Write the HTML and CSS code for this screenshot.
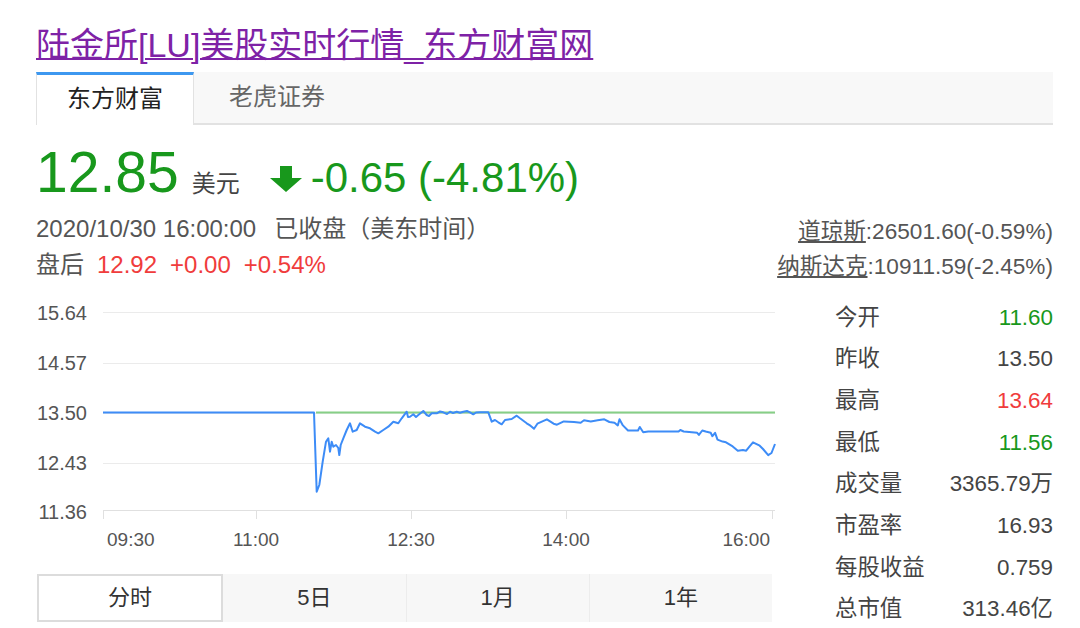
FILE: index.html
```html
<!DOCTYPE html>
<html lang="zh-CN">
<head>
<meta charset="utf-8">
<title>陆金所[LU]美股实时行情_东方财富网</title>
<link rel="stylesheet" href="styles.css">
</head>
<body>
<div class="page">
  <h1 class="title"><a href="#">陆金所[LU]美股实时行情_东方财富网</a></h1>
  <div class="tabs">
    <div class="tab active">东方财富</div>
    <div class="tab">老虎证券</div>
  </div>
  <div class="quote">
    <div class="quote-main">
      <div class="price-row">
        <span class="price">12.85</span>
        <span class="unit">美元</span>
        <svg class="arrow" viewBox="0 0 32 26" width="32" height="26"><path d="M10 0h12v12h10L16 26 0 12h10z" fill="#18981c"/></svg>
        <span class="change">-0.65 (-4.81%)</span>
      </div>
      <div class="time-row">2020/10/30 16:00:00<span class="status">已收盘（美东时间）</span></div>
      <div class="after-row"><span class="after-label">盘后</span><span class="up">12.92</span><span class="up">+0.00</span><span class="up">+0.54%</span></div>
    </div>
    <div class="indices">
      <div class="index"><a href="#">道琼斯</a>:26501.60(-0.59%)</div>
      <div class="index"><a href="#">纳斯达克</a>:10911.59(-2.45%)</div>
    </div>
  </div>
  <div class="body">
    <div class="chart-col">
      <svg class="chart" width="745" height="270" viewBox="0 0 745 270">
        <g class="grid">
          <line x1="67" y1="22.5" x2="739" y2="22.5"/>
          <line x1="67" y1="73.5" x2="739" y2="73.5"/>
          <line x1="67" y1="123.5" x2="739" y2="123.5"/>
          <line x1="67" y1="173.5" x2="739" y2="173.5"/>
        </g>
        <g class="axis">
          <line x1="67" y1="220.5" x2="739" y2="220.5"/>
          <line x1="67.5" y1="220" x2="67.5" y2="229"/>
          <line x1="220.5" y1="220" x2="220.5" y2="229"/>
          <line x1="375.5" y1="220" x2="375.5" y2="229"/>
          <line x1="530.5" y1="220" x2="530.5" y2="229"/>
          <line x1="736.5" y1="220" x2="736.5" y2="229"/>
        </g>
        <g class="ylabels">
          <text x="51" y="30">15.64</text>
          <text x="51" y="80">14.57</text>
          <text x="51" y="130">13.50</text>
          <text x="51" y="180">12.43</text>
          <text x="51" y="229">11.36</text>
        </g>
        <g class="xlabels">
          <text x="71" y="256" class="start">09:30</text>
          <text x="220" y="256">11:00</text>
          <text x="375" y="256">12:30</text>
          <text x="530" y="256">14:00</text>
          <text x="734" y="256" class="end">16:00</text>
        </g>
        <line class="prev-close" x1="280" y1="122.5" x2="739" y2="122.5"/>
        <polyline class="price-line" points="67,122.5 278,122.5 280.7,201.7 283.3,195 286.7,171.7 290,151.7 292.3,148.3 294,161.7 295.7,151.7 297.3,156.7 300,155 302.3,158 303.3,165 304.7,155 307.3,148.3 310.7,140 314,133.3 316.7,141.7 320.7,140 324,133.3 329,136.7 334,138.3 339,141.7 342.3,143.3 347.3,140 352.3,136.7 357.3,131.7 362.3,133.3 365.7,128.3 370.7,121.7 372,127 374,126.7 377.3,124.3 380,127 382.3,125 387.3,121 390.7,125 393,126 395.7,123.3 400.7,123.3 404,121.5 407.3,122.3 411,124 414,121.7 417,123 420.7,121.7 424,122.8 427.3,121.7 431,121 434,122.3 437.3,124.3 440,122.5 444,122.3 452.3,122.3 455.7,131.7 459,130 462.3,132.3 465.7,134.3 469,130 475.7,129 480.7,125.7 484,128.3 490.7,133.3 494,135.4 495.7,136.7 498,138.8 501.4,133.7 510.9,129.3 517.6,133.7 521,134.7 527.8,131.4 538,132 544.7,132.7 548,130.3 554.8,131.4 561.6,130.3 568.3,129.3 573.4,132 578.5,132.7 581.8,135.4 583.5,129.3 586.9,135.4 592,140.5 602,140.5 603.8,137 607.2,142.2 612.2,141.5 629,141.5 642.6,141.5 644.3,140 647.7,141.5 661.2,142.8 662.9,144.9 666.3,140.5 669.7,141.5 674.7,142.8 676.4,146.2 679.1,142.8 681.5,149.6 686.6,151.6 690,152.3 696.7,156.4 701.8,160.7 706.9,160 710.2,160.7 713.6,156.4 717,152.3 723.7,155.7 727,159 732.2,165.1 735.5,163 739,154"/>
      </svg>
      <div class="periods">
        <div class="period active">分时</div>
        <div class="period">5日</div>
        <div class="period">1月</div>
        <div class="period">1年</div>
      </div>
    </div>
    <div class="stats">
      <div class="stat"><span class="label">今开</span><span class="val down">11.60</span></div>
      <div class="stat"><span class="label">昨收</span><span class="val">13.50</span></div>
      <div class="stat"><span class="label">最高</span><span class="val up-val">13.64</span></div>
      <div class="stat"><span class="label">最低</span><span class="val down">11.56</span></div>
      <div class="stat"><span class="label">成交量</span><span class="val">3365.79万</span></div>
      <div class="stat"><span class="label">市盈率</span><span class="val">16.93</span></div>
      <div class="stat"><span class="label">每股收益</span><span class="val">0.759</span></div>
      <div class="stat"><span class="label">总市值</span><span class="val">313.46亿</span></div>
    </div>
  </div>
</div>
</body>
</html>
```
FILE: styles.css
```css
html, body {
  margin: 0;
  padding: 0;
  overflow: hidden;
  background: #fff;
}
body {
  font-family: "Liberation Sans", "Noto Sans CJK SC", sans-serif;
  color: #333;
}
.page {
  width: 1017px;
  padding: 0 27px 0 36px;
}
.title {
  margin: 0;
  padding-top: 24px;
  font-size: 34px;
  line-height: 42px;
  font-weight: normal;
}
.title a {
  color: #7e22a6;
  text-decoration: underline;
  text-decoration-thickness: 2px;
}
.tabs {
  margin-top: 6px;
  height: 53px;
  box-sizing: border-box;
  background: #f8f8f8;
  border-bottom: 2px solid #e2e2e2;
  display: flex;
  align-items: flex-start;
}
.tab {
  height: 51px;
  box-sizing: border-box;
  padding: 0 35px;
  font-size: 24px;
  line-height: 50px;
  color: #666;
}
.tab.active {
  height: 53px;
  background: #fff;
  border-top: 3px solid #3d98f0;
  border-left: 1px solid #e2e2e2;
  border-right: 1px solid #e2e2e2;
  color: #222;
  padding: 0 30px;
  line-height: 48px;
}
.quote {
  display: flex;
  justify-content: space-between;
  height: 155px;
}
.price-row {
  display: flex;
  align-items: baseline;
  margin-top: 17px;
  height: 60px;
}
.price {
  font-size: 57px;
  line-height: 60px;
  color: #18981c;
}
.unit {
  font-size: 24px;
  color: #444;
  margin-left: 13px;
}
.arrow {
  margin-left: 30px;
  margin-bottom: -1px;
}
.change {
  font-size: 42px;
  color: #18981c;
  margin-left: 9px;
}
.time-row {
  margin-top: 12px;
  font-size: 24px;
  line-height: 30px;
  color: #555;
}
.status {
  margin-left: 18px;
}
.after-row {
  margin-top: 6px;
  font-size: 24px;
  line-height: 30px;
  color: #555;
}
.up {
  color: #f03c3c;
  margin-left: 13px;
}
.indices {
  padding-top: 89px;
  text-align: right;
  font-size: 22.6px;
  line-height: 35px;
  color: #555;
}
.indices a {
  color: #555;
  text-decoration: underline;
}
.body {
  display: flex;
  justify-content: space-between;
}
.chart-col {
  width: 745px;
  padding-top: 10px;
}
.chart {
  display: block;
}
.grid line {
  stroke: #ebebeb;
  stroke-width: 1;
}
.axis line {
  stroke: #e0e0e0;
  stroke-width: 1;
}
.ylabels text {
  font-family: "Liberation Sans", sans-serif;
  font-size: 20px;
  fill: #555;
  text-anchor: end;
}
.xlabels text {
  font-family: "Liberation Sans", sans-serif;
  font-size: 19px;
  fill: #555;
  text-anchor: middle;
}
.xlabels text.start {
  text-anchor: start;
}
.xlabels text.end {
  text-anchor: end;
}
.prev-close {
  stroke: #86cf86;
  stroke-width: 2;
}
.price-line {
  fill: none;
  stroke: #3d8cf7;
  stroke-width: 2;
  stroke-linejoin: round;
}
.periods {
  display: flex;
  margin: 14px 0 0 1px;
  width: 735px;
  height: 48px;
  background: #f7f7f7;
}
.period {
  flex: 1;
  box-sizing: border-box;
  text-align: center;
  font-size: 22px;
  line-height: 48px;
  color: #333;
  border-left: 1px solid #ececec;
}
.period:nth-child(2) {
  border-left: none;
}
.period.active {
  background: #fff;
  border: 2px solid #dcdcdc;
  line-height: 44px;
}
.stats {
  width: 218px;
  padding-top: 16.5px;
}
.stat {
  display: flex;
  justify-content: space-between;
  font-size: 22.4px;
  line-height: 41.7px;
  color: #444;
}
.val.down {
  color: #18981c;
}
.val.up-val {
  color: #f03c3c;
}
```
